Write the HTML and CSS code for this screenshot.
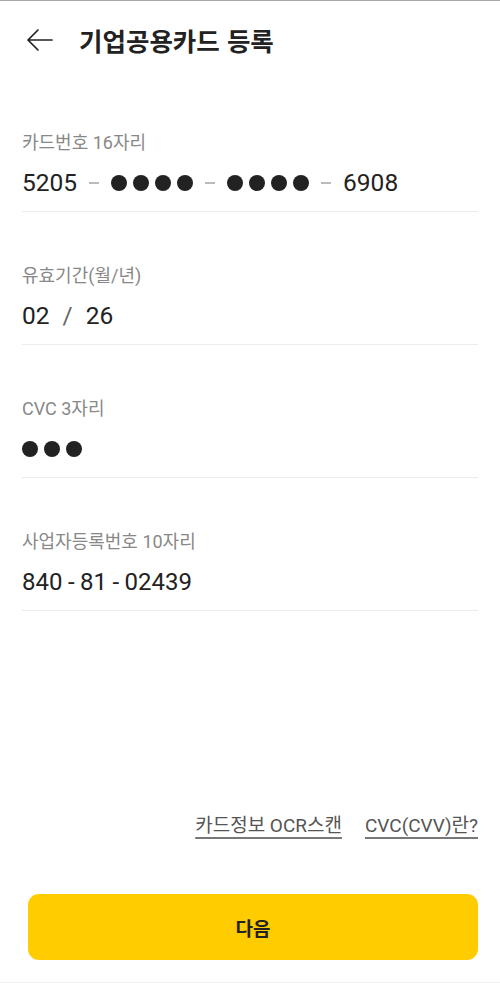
FILE: index.html
```html
<!DOCTYPE html>
<html lang="ko">
<head>
<meta charset="utf-8">
<link rel="stylesheet" href="styles.css">
</head>
<body>
<div class="page">
  <header class="header">
    <svg class="back" width="28" height="24" viewBox="0 0 28 24">
      <path d="M2 12 H26 M12 2 L2 12 L12 22" fill="none" stroke="#222" stroke-width="1.7" stroke-linecap="round" stroke-linejoin="round"/>
    </svg>
    <h1 class="title">기업공용카드 등록</h1>
  </header>
  <main class="form">
    <div class="field">
      <div class="label">카드번호 16자리</div>
      <div class="value row">
        <span>5205</span><span class="dash"></span>
        <span class="dots"><i></i><i></i><i></i><i></i></span><span class="dash"></span>
        <span class="dots"><i></i><i></i><i></i><i></i></span><span class="dash"></span>
        <span>6908</span>
      </div>
    </div>
    <div class="field">
      <div class="label">유효기간(월/년)</div>
      <div class="value row">
        <span>02</span><span class="slash">/</span><span>26</span>
      </div>
    </div>
    <div class="field">
      <div class="label">CVC 3자리</div>
      <div class="value row">
        <span class="dots"><i></i><i></i><i></i></span>
      </div>
    </div>
    <div class="field">
      <div class="label">사업자등록번호 10자리</div>
      <div class="value tight">840 - 81 - 02439</div>
    </div>
  </main>
  <div class="links">
    <a class="link">카드정보 OCR스캔</a>
    <a class="link">CVC(CVV)란?</a>
  </div>
  <button class="next">다음</button>
</div>
</body>
</html>
```
FILE: styles.css
```css
* { box-sizing: border-box; margin: 0; padding: 0; }
html, body { background: #fff; }
body {
  font-family: "Roboto", "Noto Sans CJK KR", sans-serif;
  color: #222;
}
.page {
  width: 500px;
  height: 983px;
  display: flex;
  flex-direction: column;
  border-top: 1px solid #a8a8a8;
  border-bottom: 1px solid #f0f0f0;
}
.header {
  height: 81px;
  display: flex;
  align-items: center;
  padding-left: 26px;
  padding-bottom: 4px;
}
.back { display: block; margin-right: 25px; }
.title {
  font-size: 25.5px;
  font-weight: 700;
  color: #222;
  font-family: "Noto Sans CJK KR", sans-serif;
}
.form {
  padding: 49px 22px 0 22px;
  display: flex;
  flex-direction: column;
  gap: 52px;
}
.field {
  border-bottom: 1.5px solid #ececec;
  padding-bottom: 12px;
}
.label {
  font-size: 18px;
  line-height: 24px;
  color: #888;
  margin-bottom: 12px;
}
.value {
  font-size: 24.5px;
  line-height: 32px;
  height: 32px;
  color: #222;
}
.tight { font-size: 24px; word-spacing: -0.5px; }
.row { display: flex; align-items: center; gap: 12px; }
.dash { width: 10px; height: 1.5px; background: #bbb; }
.dots { display: flex; gap: 6px; }
.dots i { display: block; width: 16px; height: 16px; border-radius: 50%; background: #222; }
.slash { color: #666; margin: 0 1px; }
.links {
  margin-top: auto;
  display: flex;
  justify-content: flex-end;
  gap: 23px;
  padding-right: 22px;
}
.link {
  font-size: 19px;
  line-height: 24px;
  color: #555;
  text-decoration: underline;
  text-decoration-color: #777;
  text-underline-offset: 5px;
  text-decoration-thickness: 1.5px;
}
.next {
  margin: 56px 22px 22px 28px;
  height: 66px;
  border: none;
  border-radius: 11px;
  background: #ffcc00;
  font-family: "Noto Sans CJK KR", sans-serif;
  font-size: 19px;
  font-weight: 700;
  color: #222;
}
```
